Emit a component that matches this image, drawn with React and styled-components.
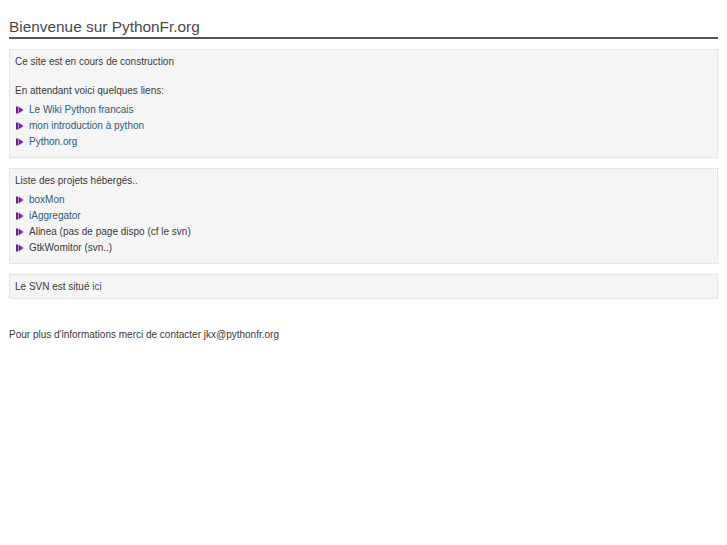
import React from 'react';
import styled, { createGlobalStyle } from 'styled-components';

const GlobalStyle = createGlobalStyle`
	body {
		margin: 0;
		background-color: #fff;
		font-family: 'Liberation Sans', Arial, sans-serif;
		color: #3a3a3a;
	}
`;

const Page = styled.div`
	padding: 17px 9px 0;
`;
const Title = styled.h1`
	margin: 0 0 10px;
	padding-bottom: 0;
	font-size: 15.4px;
	font-weight: normal;
	color: #4a4a4a;
	border-bottom: 2px solid #555;
	line-height: 20px;
`;
const Box = styled.div`
	background-color: #f5f5f5;
	border: 1px dotted #d8d8d8;
	padding: 4px 5px 3px;
	margin-bottom: 10px;
	font-size: 10px;
	line-height: 16px;
`;
const Para = styled.p`
	margin: 0;
	${(props) => props.spaced && `margin-bottom: 13px;`}
`;
const List = styled.ul`
	list-style: none;
	margin: 3px 0 4px;
	padding: 0;
`;
const Item = styled.li`
	display: flex;
	align-items: center;
	gap: 5px;
	height: 16px;
	padding-left: 1px;
`;
const Link = styled.a`
	color: #2d5a78;
	text-decoration: none;
`;
const Footer = styled.p`
	margin: 28px 0 0;
	font-size: 10px;
	line-height: 16px;
`;

const Bullet = () => (
	<svg width="8" height="8" viewBox="0 0 8 8">
		<rect x="0" y="0.5" width="2" height="7" fill="#5a2a7a" />
		<path d="M2.5 0.5 L7.5 4 L2.5 7.5 Z" fill="#7a1fb0" />
	</svg>
);

const links = [
	'Le Wiki Python francais',
	'mon introduction à python',
	'Python.org',
];

const projects = [
	{ label: 'boxMon', link: true },
	{ label: 'iAggregator', link: true },
	{ label: 'Alinea (pas de page dispo (cf le svn)', link: false },
	{ label: 'GtkWomitor (svn..)', link: false },
];

const App = () => {
	return (
		<Page>
			<GlobalStyle />
			<Title>Bienvenue sur PythonFr.org</Title>
			<Box>
				<Para spaced>Ce site est en cours de construction</Para>
				<Para>En attendant voici quelques liens:</Para>
				<List>
					{links.map((l) => (
						<Item key={l}>
							<Bullet />
							<Link href="#">{l}</Link>
						</Item>
					))}
				</List>
			</Box>
			<Box>
				<Para>Liste des projets hébergés..</Para>
				<List>
					{projects.map((p) => (
						<Item key={p.label}>
							<Bullet />
							{p.link ? <Link href="#">{p.label}</Link> : <span>{p.label}</span>}
						</Item>
					))}
				</List>
			</Box>
			<Box>
				Le SVN est situé <Link href="#">ici</Link>
			</Box>
			<Footer>Pour plus d'informations merci de contacter jkx@pythonfr.org</Footer>
		</Page>
	);
};

export default App;
